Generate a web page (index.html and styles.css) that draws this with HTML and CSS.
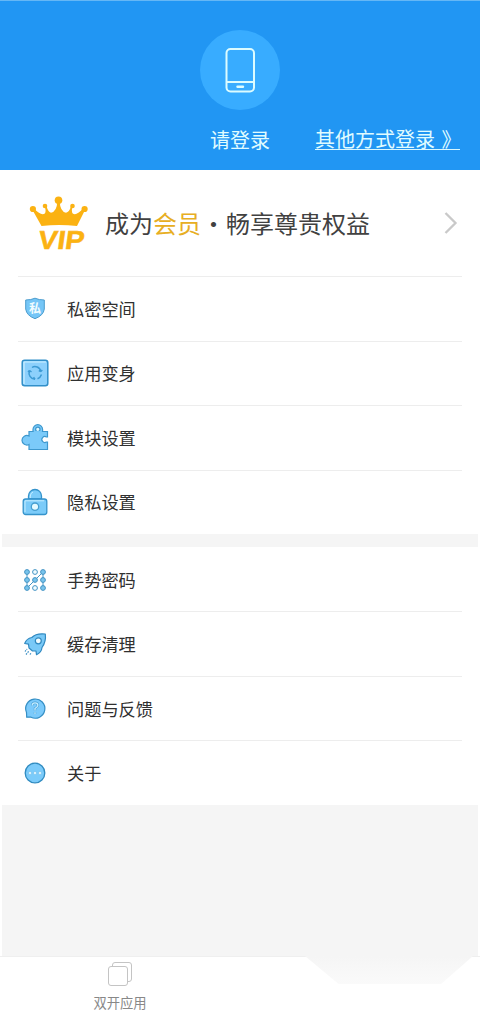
FILE: index.html
```html
<!DOCTYPE html>
<html lang="zh-CN">
<head>
<meta charset="utf-8">
<title>个人中心</title>
<link rel="stylesheet" href="styles.css">
</head>
<body>
<main class="app">
  <header class="header">
    <div class="avatar">
      <svg width="30" height="46" viewBox="0 0 30 46" fill="none" stroke="#dcfcff" stroke-width="2">
        <rect x="1.500" y="2" width="27.500" height="42.500" rx="4"/>
        <path d="M2 35h26"/><path d="M12.500 39.700h5.500" stroke-width="2.400" stroke-linecap="round"/>
      </svg>
    </div>
    <div class="login-row">
      <span class="login">请登录</span>
      <a class="other-login">其他方式登录 <span class="arrow">》</span></a>
    </div>
  </header>

  <section class="vip">
    <svg class="vip-icon" width="60" height="68" viewBox="0 -6 60 68" fill="#fbb212">
      <path d="M12.500 31 3.500 15 5.500 14Q12 21 15.800 18.500 17.500 16 15.500 11.500L17.500 11Q19 17 22 17.700 28 16.500 28.300 6H30.700Q31 16.500 37 17.700 40.500 17 42 11L43.800 11.500Q42 16 43.700 18.500 47.500 21 53.500 14L56 15 48 31Q30 29 12.500 31Z"/>
      <circle cx="29.500" cy="5.300" r="3.800"/><circle cx="3.900" cy="14" r="3.100"/><circle cx="55.600" cy="14" r="3.100"/>
      <circle cx="16" cy="11" r="2.300"/><circle cx="43.500" cy="11" r="2.300"/>
      <text x="16" y="54.300" textLength="46" lengthAdjust="spacingAndGlyphs" class="vip-word" transform="skewX(-8)">VIP</text>
    </svg>
    <p class="vip-title">成为<span class="gold">会员</span><span class="dot">·</span>畅享尊贵权益</p>
    <svg class="chevron" width="14" height="24" viewBox="0 0 14 24" fill="none" stroke="#c9c9c9" stroke-width="2.300"><path d="M1.500 2 11.500 12 1.500 22"/></svg>
  </section>

  <ul class="menu">
    <li class="item">
      <svg class="icon" viewBox="0 0 28 28"><path d="M14 4.200Q18 6 23.300 6V15Q22.500 21.500 14 24.700 5.500 21.500 4.700 15V6Q10 6 14 4.200Z" fill="#75c6f7" stroke="#4c9dce"/><text x="14" y="18.500" class="shield-word">私</text></svg>
      <span>私密空间</span>
    </li>
    <li class="item">
      <svg class="icon" viewBox="0 0 28 28"><rect x="1.200" y="1.200" width="25.600" height="25.600" rx="2.500" fill="#8cd0fc" stroke="#318fc9" stroke-width="1.500"/><path d="M3 25V3H25" fill="none" stroke="#ccefff" stroke-width="1.200"/><g fill="none" stroke="#3c9ad4" stroke-width="1.500"><path d="M8.500 11.500C7 16 9.500 20 14 20.300M11 8.500C14 6.500 19 8 19.800 12.500M16.500 19.800Q19.500 18.500 20.500 15.500"/><path d="M8.500 11.500 7 13M8.500 11.500l2 1.500M19.800 12.500l-2-1M19.800 12.500l1.500-1.500M14 20.300l-1.500-2"/></g></svg>
      <span>应用变身</span>
    </li>
    <li class="item">
      <svg class="icon" viewBox="0 0 28 28" fill="#7bcaf9" stroke="#3e98ce" stroke-width="1.200"><path d="M12 9V6.500a4.800 4.800 0 0 1 9.600 0V9"/><path d="M8 8.500H26.500V14H25.500a3 3 0 1 0 0 5h1V26.500H8V21.500a4.800 4.800 0 1 1 0-8.500Z"/><circle cx="16.800" cy="6.300" r="2.200" fill="#e3f8ff"/><path d="M12.700 8.800h8.200" stroke="#7bcaf9" stroke-width="1.500"/></svg>
      <span>模块设置</span>
    </li>
    <li class="item">
      <svg class="icon" viewBox="0 0 28 28" fill="#7bcbf9" stroke="#3593cb" stroke-width="1.300"><path d="M7.500 11V8a6.500 6.500 0 0 1 13 0V11Z"/><rect x="2.200" y="11" width="23.600" height="15.500" rx="2.500"/><path d="M4 24V12.800H23M9.300 10V8Q9.500 5 12 4" fill="none" stroke="#c6edff" stroke-width="1"/><circle cx="14" cy="18.700" r="3.700" fill="#e5faff" stroke="#469fd0"/></svg>
      <span>隐私设置</span>
    </li>
  </ul>

  <ul class="menu second">
    <li class="item">
      <svg class="icon" viewBox="0 0 28 28" fill="#79c4ec" stroke="#4494c4" stroke-width="1"><path d="M6 6v16L22 6v16" fill="none"/><circle cx="6" cy="6" r="2.400"/><circle cx="14" cy="6" r="2.400" fill="#f0fbff"/><circle cx="22" cy="6" r="2.400"/><circle cx="6" cy="14" r="2.400"/><circle cx="14" cy="14" r="2.400"/><circle cx="22" cy="14" r="2.400"/><circle cx="6" cy="22" r="2.400"/><circle cx="14" cy="22" r="2.400" fill="#f0fbff"/><circle cx="22" cy="22" r="2.400"/></svg>
      <span>手势密码</span>
    </li>
    <li class="item">
      <svg class="icon" viewBox="0 0 28 28" fill="#79c9f7" stroke="#3189c0" stroke-width="1.200" stroke-linejoin="round"><path d="M24.300 4Q15 3 10.800 7.500 5.500 8.500 3.700 13.500L7.500 14.200 8 18 11.500 21 15 21 15.500 24.700Q20.500 22.500 21 17.500 25.300 11.500 24.300 4Z"/><circle cx="17.300" cy="10.800" r="3" fill="#f1fcff"/><path d="m4 21.500 2-2.500M5 24.500l3-3.500M9 24.500l1.500-2" stroke-dasharray="1.500 1"/></svg>
      <span>缓存清理</span>
    </li>
    <li class="item">
      <svg class="icon" viewBox="0 0 28 28"><path d="M5.500 18.500A9.600 9.600 0 1 1 10 23.200H5.700Z" fill="#7bcafb" stroke="#358fc5" stroke-width="1.200"/><path d="M11.200 11.500Q11.200 8.800 14 8.800 16.900 8.800 16.900 11.300 16.900 12.700 14 14.500V16.500M14 18.300v1.700" fill="none" stroke="#4ca1d4" stroke-width="2.400"/><path d="M11.200 11.500Q11.200 8.800 14 8.800 16.900 8.800 16.900 11.300 16.900 12.700 14 14.500V16.500M14 18.300v1.700" fill="none" stroke="#c4ecff" stroke-width="1.300"/></svg>
      <span>问题与反馈</span>
    </li>
    <li class="item">
      <svg class="icon" viewBox="0 0 28 28"><circle cx="14" cy="14" r="9.800" fill="#7bcbfa" stroke="#308bc0" stroke-width="1.300"/><g fill="#effcff" stroke="#67b5e4" stroke-width=".5"><circle cx="9" cy="14" r="1.500"/><circle cx="14" cy="14" r="1.500"/><circle cx="19" cy="14" r="1.500"/></g></svg>
      <span>关于</span>
    </li>
  </ul>

  <nav class="tabs">
    <div class="tab">
      <svg width="26" height="26" viewBox="0 0 26 26" fill="#fff" stroke="#c4c4c4"><rect x="5.500" y="1.500" width="19" height="19" rx="2.500"/><rect x="1.500" y="5.500" width="19" height="19" rx="2.500"/></svg>
      <span>双开应用</span>
    </div>
    <div class="tab-notch"></div>
  </nav>
</main>
</body>
</html>
```
FILE: styles.css
```css
* { box-sizing: border-box; }
body { margin: 0; background: #fff; font-family: "Noto Sans CJK SC", sans-serif; color: #303030; }
.app { display: flex; flex-direction: column; width: 480px; height: 1020px; background: linear-gradient(90deg, #fff 2px, #f5f5f5 2px, #f5f5f5 478px, #fff 478px); }
.header { height: 170px; padding-top: 29px; background: #2196f3; border-top: 1px solid #65b7f5; color: #e0fcff; }
.avatar { display: flex; align-items: center; justify-content: center; width: 80px; height: 80px; margin: 0 auto; border-radius: 50%; background: #38acff; }
.login-row { display: flex; justify-content: space-between; padding: 14px 20px 0 210px; font-size: 20px; line-height: 30px; white-space: nowrap; }
.login { padding-top: 1px; }
.other-login { width: 145px; height: 26px; border-bottom: 1px solid #d8f7ff; }
.arrow { display: inline-block; width: 20px; margin-left: 2px; }
.vip { display: flex; align-items: center; height: 106px; padding: 0 22px 0 29px; background: #fff; }
.vip-icon { margin-right: 16px; }
.vip-word { font-family: "Liberation Sans", sans-serif; font-size: 26px; font-weight: bold; stroke: #fbb212; stroke-width: .5px; }
.vip-title { flex: 1; margin: 0; font-size: 24px; line-height: 36px; white-space: nowrap; color: #414141; }
.gold { color: #e7ae23; }
.dot { display: inline-block; width: 25px; text-align: center; }
.menu { margin: 0; padding: 0; list-style: none; background: #fff; }
.second { margin-top: 13px; }
.item { display: flex; align-items: center; gap: 18px; height: 64.500px; padding-left: 21px; font-size: 17.200px; background: linear-gradient(#ededed, #ededed) 18px 0 / 444px 1px no-repeat; }
.second .item { height: 64.500px; padding-top: 1px; }
.second .item:first-child { height: 64px; background: none; }
.icon { flex: none; width: 28px; height: 28px; }
.shield-word { font-size: 12px; font-weight: bold; text-anchor: middle; fill: #f0fcff; }
.tabs { display: flex; height: 64px; margin-top: auto; background: #fff; border-top: 1px solid #efefef; }
.tab { display: flex; flex-direction: column; align-items: center; width: 240px; padding-top: 4px; color: #888; font-size: 13.300px; line-height: 20px; }
.tab span { margin-top: 6px; }
.tab-notch { width: 168px; height: 28px; margin: -1px 0 0 65px; background: linear-gradient(#f5f5f5, #fafafa); clip-path: polygon(0 0, 100% 0, 81% 100%, 20% 100%); }
```
